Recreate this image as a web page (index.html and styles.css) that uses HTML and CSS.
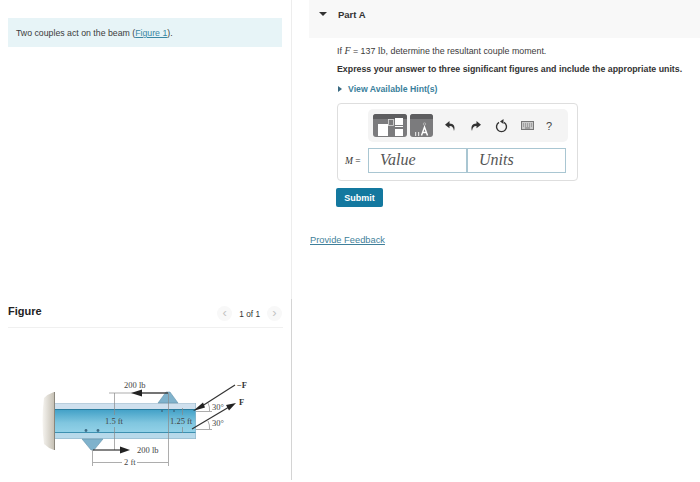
FILE: index.html
```html
<!DOCTYPE html>
<html lang="en">
<head>
    <meta charset="UTF-8">
    <meta name="viewport" content="width=device-width, initial-scale=1.0">
    <title>Part A</title>
    <link rel="stylesheet" href="styles.css">
</head>
<body>
    <div class="page">
        <div class="left">
            <div class="intro">
                <div class="callout">Two couples act on the beam (<a href="#">Figure 1</a>).</div>
            </div>
            <div class="figure">
                <div class="figure-head">
                    <h2>Figure</h2>
                    <div class="pager">
                        <span class="pager-btn">&#8249;</span>
                        <span class="pager-text">1 of 1</span>
                        <span class="pager-btn">&#8250;</span>
                    </div>
                </div>
                <svg class="beam" viewBox="0 328 291 154" width="291" height="154">
                    <defs>
                        <linearGradient id="web" x1="0" y1="0" x2="0" y2="1">
                            <stop offset="0" stop-color="#3f9fc6"/>
                            <stop offset="0.6" stop-color="#80c6df"/>
                            <stop offset="1" stop-color="#92d1e7"/>
                        </linearGradient>
                        <linearGradient id="wall" x1="0" y1="0" x2="1" y2="0">
                            <stop offset="0" stop-color="#f6f4f0"/>
                            <stop offset="1" stop-color="#c6c1b5"/>
                        </linearGradient>
                    </defs>
                    <!-- wall -->
                    <path d="M44 398 Q48 394 54 392 L54 450 Q48 448 44 444 Q41 421 44 398 Z" fill="url(#wall)"/>
                    <line x1="54.5" y1="392" x2="54.5" y2="450" stroke="#8a867c"/>
                    <!-- beam -->
                    <rect x="55" y="403" width="141" height="6" fill="#cfe0ee"/>
                    <rect x="55" y="409" width="141" height="23" fill="url(#web)"/>
                    <rect x="55" y="433" width="141" height="6" fill="#b7d9ea"/>
                    <line x1="55" y1="409.5" x2="196" y2="409.5" stroke="#2a7c9e"/>
                    <line x1="55" y1="432.5" x2="196" y2="432.5" stroke="#3d90b0"/>
                    <line x1="55" y1="403.5" x2="196" y2="403.5" stroke="#a9c1d2" stroke-width="0.6"/>
                    <line x1="195.5" y1="403" x2="195.5" y2="439" stroke="#8fb3c8" stroke-width="0.6"/>
                    <line x1="55" y1="438.5" x2="196" y2="438.5" stroke="#8fb3c8" stroke-width="0.6"/>
                    <circle cx="86" cy="430.5" r="1.4" fill="#3e6c86"/>
                    <circle cx="98" cy="430.5" r="1.4" fill="#3e6c86"/>
                    <circle cx="162" cy="411" r="1" fill="#3e6c86"/>
                    <circle cx="174" cy="411" r="1" fill="#3e6c86"/>
                    <!-- brackets -->
                    <path d="M158 403 L166 392 H170 L178 403 Z" fill="#7fb2cc" stroke="#5c8aa3" stroke-width="0.5"/>
                    <path d="M82 439 H103 L94 450 H91 Z" fill="#7fb2cc" stroke="#5c8aa3" stroke-width="0.5"/>
                    <!-- dimensions -->
                    <g stroke="#8a8a8a" stroke-width="0.7" fill="none">
                        <line x1="109" y1="393" x2="168" y2="393"/>
                        <line x1="114.5" y1="393" x2="114.5" y2="415"/>
                        <line x1="114.5" y1="427" x2="114.5" y2="450"/>
                        <line x1="168.5" y1="393" x2="168.5" y2="466"/>
                        <line x1="92.5" y1="450" x2="92.5" y2="466"/>
                        <line x1="93" y1="462.5" x2="122" y2="462.5"/>
                        <line x1="137" y1="462.5" x2="168" y2="462.5"/>
                        <line x1="182.5" y1="408" x2="182.5" y2="415"/>
                        <line x1="182.5" y1="427" x2="182.5" y2="433"/>
                        <line x1="196" y1="411.5" x2="212" y2="411.5"/>
                        <line x1="196" y1="429.5" x2="212" y2="429.5"/>
                        <path d="M208 403 Q210 407 209.5 411"/>
                        <path d="M208 421 Q210 425 209.5 429"/>
                    </g>
                    <!-- forces -->
                    <g stroke="#333" stroke-width="1.2" fill="none">
                        <line x1="141" y1="393" x2="168" y2="393"/>
                        <line x1="93" y1="450" x2="122" y2="450"/>
                        <line x1="235" y1="385" x2="199" y2="408"/>
                        <line x1="192" y1="429" x2="229" y2="407"/>
                    </g>
                    <g fill="#222">
                        <path d="M131 393 L142 389.5 V396.5 Z"/>
                        <path d="M130 450 L120 446.5 V453.5 Z"/>
                        <path d="M193 411 L203 402.5 L205 407.5 Z"/>
                        <path d="M236 403 L226 405 L229 410.5 Z"/>
                    </g>
                    <g class="dim-text">
                        <text x="124" y="388">200 lb</text>
                        <text x="137" y="453">200 lb</text>
                        <text x="105" y="424">1.5 ft</text>
                        <text x="170" y="424">1.25 ft</text>
                        <text x="124" y="465">2 ft</text>
                        <text x="212" y="410">30°</text>
                        <text x="212" y="426">30°</text>
                    </g>
                    <g class="force-text">
                        <text x="237" y="388">−F</text>
                        <text x="239" y="405">F</text>
                    </g>
                </svg>
            </div>
        </div>

        <div class="right">
            <div class="part-head">
                <span class="caret-down"></span>
                <span class="part-title">Part A</span>
            </div>
            <div class="part-body">
                <p class="question">If <i class="math">F</i> = 137 <span class="unit">lb</span>, determine the resultant couple moment.</p>
                <p class="instructions">Express your answer to three significant figures and include the appropriate units.</p>
                <div class="hints"><span class="caret-right"></span><a href="#">View Available Hint(s)</a></div>

                <div class="answer-box">
                    <div class="toolbar">
                        <div class="tool-btn tool-wide">
                            <svg width="34" height="23" viewBox="0 0 34 23">
                                <rect x="0" y="0" width="34" height="5" fill="#5d5d5f"/>
                                <rect x="5" y="10" width="10" height="12" fill="#fff"/>
                                <rect x="15.5" y="5.5" width="5" height="6" fill="none" stroke="#ddd" stroke-width="0.8"/>
                                <rect x="22" y="4" width="8" height="7" fill="#fff"/>
                                <rect x="22" y="12" width="8" height="1" fill="#fff"/>
                                <rect x="22" y="15" width="8" height="7" fill="#fff"/>
                            </svg>
                        </div>
                        <div class="tool-btn tool-narrow">
                            <svg width="23" height="23" viewBox="0 0 23 23">
                                <rect x="0" y="0" width="23" height="5" fill="#5d5d5f"/>
                                <rect x="5" y="18" width="1.2" height="4" fill="#ddd"/>
                                <rect x="8" y="18" width="1.2" height="4" fill="#ddd"/>
                                <path d="M11.5 21.5 L14.5 13 L17.5 21.5 M12.7 18.5 H16.3" fill="none" stroke="#fff" stroke-width="1.4"/>
                                <circle cx="14.5" cy="10" r="1.2" fill="none" stroke="#ccc" stroke-width="0.6"/>
                            </svg>
                        </div>
                        <svg class="tool-icon undo" width="12" height="12" viewBox="0 0 12 12">
                            <path d="M5.5 1 L1 4.8 L5.5 8.2 V6 C8 5.8 9.5 7.3 10 11 C11.5 6.5 9.8 3.5 5.5 3.5 Z" fill="#333"/>
                        </svg>
                        <svg class="tool-icon redo" width="12" height="12" viewBox="0 0 12 12">
                            <path d="M6.5 1 L11 4.8 L6.5 8.2 V6 C4 5.8 2.5 7.3 2 11 C0.5 6.5 2.2 3.5 6.5 3.5 Z" fill="#333"/>
                        </svg>
                        <svg class="tool-icon reset" width="13" height="14" viewBox="0 0 13 14">
                            <path d="M4 3.3 A5 5 0 1 0 9 3.3" fill="none" stroke="#333" stroke-width="1.4"/>
                            <path d="M8.5 0 L5 2.5 L8.5 5 Z" fill="#333"/>
                        </svg>
                        <svg class="tool-icon keyboard" width="13" height="9" viewBox="0 0 13 9">
                            <rect x="0.5" y="0.5" width="12" height="8" fill="#c9c9c9" stroke="#777"/>
                            <path d="M2 3 H11 M2 5 H11" stroke="#777" stroke-dasharray="1 1"/>
                            <path d="M4 7 H9" stroke="#777"/>
                        </svg>
                        <span class="help">?</span>
                    </div>
                    <div class="answer-row">
                        <span class="answer-label"><i>M</i> =</span>
                        <div class="answer-input">Value</div>
                        <div class="answer-input">Units</div>
                    </div>
                </div>

                <button class="submit" type="button">Submit</button>
            </div>
            <a class="feedback" href="#">Provide Feedback</a>
        </div>
    </div>
</body>
</html>
```

FILE: styles.css
```css
html, body {
    margin: 0;
    padding: 0;
    background-color: #fff;
}
body {
    font-family: "Liberation Sans", Arial, sans-serif;
    color: #3b3b3b;
}
a {
    color: #3a87a3;
}
.page {
    display: flex;
    width: 700px;
    height: 482px;
    overflow: hidden;
}

/* left column */
.left {
    width: 292px;
    flex-shrink: 0;
}
.intro {
    height: 283px;
    padding-top: 18px;
    border-right: 1px solid #ededed;
}
.callout {
    width: 266px;
    height: 29px;
    margin-left: 8px;
    padding-left: 8px;
    line-height: 30px;
    font-size: 8.75px;
    background-color: #e7f4f7;
}
.figure {
    height: 181px;
    border-right: 1px solid #d4d4d4;
}
.figure-head {
    display: flex;
    justify-content: space-between;
    align-items: center;
    height: 26px;
    padding-bottom: 2px;
    margin: -2px 8px 0;
    border-bottom: 1px solid #f0f0f0;
}
.figure-head h2 {
    margin: 0 0 3px;
    font-size: 11px;
    color: #222;
}
.pager {
    display: flex;
    align-items: center;
    gap: 7px;
    margin: 3px 1px 0 0;
}
.pager-btn {
    width: 15px;
    height: 15px;
    border-radius: 50%;
    background-color: #f8f8f8;
    color: #c4c4c4;
    font-size: 13px;
    line-height: 13px;
    text-align: center;
}
.pager-text {
    font-size: 8.3px;
    color: #333;
}
.beam {
    display: block;
}
.dim-text text {
    font-family: "Liberation Serif", serif;
    font-size: 8.5px;
    fill: #444;
}
.force-text text {
    font-family: "Liberation Serif", serif;
    font-size: 8.5px;
    font-weight: bold;
    fill: #333;
}

/* right column */
.right {
    flex: 1;
    padding-left: 17px;
}
.part-head {
    display: flex;
    align-items: center;
    height: 38px;
    padding: 0 0 10px 10px;
    box-sizing: border-box;
    background-color: #f8f8f8;
}
.caret-down {
    width: 0;
    height: 0;
    border-left: 4px solid transparent;
    border-right: 4px solid transparent;
    border-top: 4px solid #333;
}
.part-title {
    margin-left: 11px;
    font-size: 9.5px;
    font-weight: bold;
    color: #333;
}
.part-body {
    padding-left: 28px;
}
.question {
    margin: 7px 0 0;
    line-height: 12px;
    font-size: 8.85px;
}
.math, .unit {
    font-family: "Liberation Serif", serif;
    font-size: 10px;
}
.instructions {
    margin: 6px 0 0;
    line-height: 12px;
    font-size: 8.8px;
    font-weight: bold;
    color: #333;
}
.hints {
    display: flex;
    align-items: center;
    margin-top: 8px;
    height: 12px;
    font-size: 8.7px;
    font-weight: bold;
}
.hints a {
    color: #3a7f9c;
    text-decoration: none;
}
.caret-right {
    width: 0;
    height: 0;
    margin: 0 6px 0 1px;
    border-top: 3.5px solid transparent;
    border-bottom: 3.5px solid transparent;
    border-left: 4px solid #3a6a82;
}
.answer-box {
    width: 239px;
    height: 76px;
    margin-top: 8px;
    border: 1px solid #dedede;
    border-radius: 4px;
}
.toolbar {
    display: flex;
    align-items: center;
    width: 200px;
    height: 33px;
    margin: 5px 0 0 30px;
    box-sizing: border-box;
    padding-left: 5px;
    background-color: #f4f4f4;
    border-radius: 5px;
}
.tool-btn {
    height: 23px;
    overflow: hidden;
    border-radius: 3px;
    background-color: #7b7b7d;
}
.tool-btn svg {
    display: block;
}
.tool-wide {
    width: 34px;
}
.tool-narrow {
    width: 23px;
    margin-left: 3px;
}
.undo {
    margin-left: 11px;
}
.redo {
    margin-left: 14px;
}
.reset {
    margin-left: 13px;
}
.keyboard {
    margin-left: 13px;
}
.help {
    margin-left: 12px;
    font-size: 11px;
    color: #444;
}
.answer-row {
    display: flex;
    align-items: center;
    margin-top: 6px;
}
.answer-label {
    width: 30px;
    padding-left: 7px;
    box-sizing: border-box;
    font-family: "Liberation Serif", serif;
    font-size: 9.5px;
    color: #333;
}
.answer-input {
    width: 99px;
    height: 25px;
    box-sizing: border-box;
    padding-left: 11px;
    line-height: 22px;
    border: 1px solid #a9c6d2;
    font-family: "Liberation Serif", serif;
    font-size: 16px;
    font-style: italic;
    color: #555;
}
.submit {
    display: block;
    width: 47px;
    height: 19px;
    margin: 7px 0 0 -1px;
    padding: 0;
    border: none;
    border-radius: 2px;
    background-color: #13789f;
    color: #fff;
    font-family: "Liberation Sans", Arial, sans-serif;
    font-size: 9px;
    font-weight: bold;
}
.feedback {
    display: inline-block;
    margin: 28px 0 0 1px;
    font-size: 9.3px;
    color: #3f7f9a;
}
```
